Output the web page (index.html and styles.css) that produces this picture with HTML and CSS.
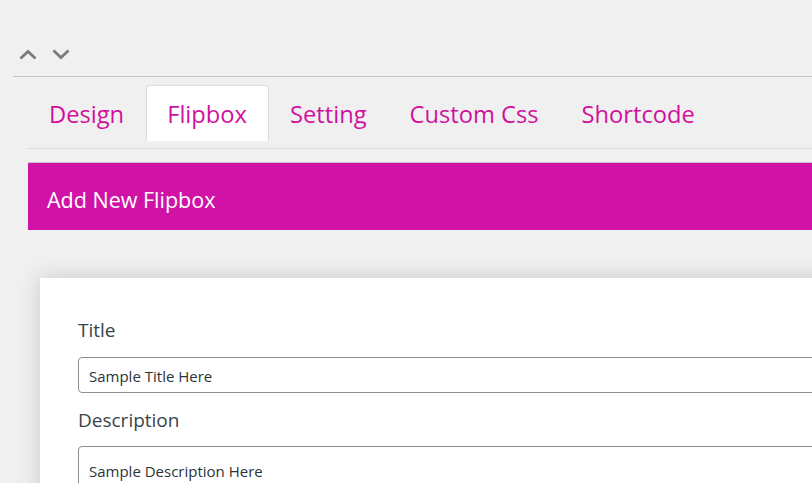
FILE: index.html
```html
<!DOCTYPE html>
<html>
<head>
<meta charset="utf-8">
<link rel="stylesheet" href="styles.css">
</head>
<body>
<div class="page">
  <div class="topbar">
    <svg class="chev" width="18" height="11" viewBox="0 0 18 11"><polyline points="1.5,9.5 9,2.5 16.5,9.5" fill="none" stroke="#787c82" stroke-width="2.8"/></svg>
    <svg class="chev" width="18" height="11" viewBox="0 0 18 11"><polyline points="1.5,1.5 9,8.5 16.5,1.5" fill="none" stroke="#787c82" stroke-width="2.8"/></svg>
  </div>
  <div class="rule"></div>
  <div class="wrap">
    <div class="tabs">
      <div class="tab">Design</div>
      <div class="tab active">Flipbox</div>
      <div class="tab">Setting</div>
      <div class="tab">Custom Css</div>
      <div class="tab">Shortcode</div>
    </div>
    <div class="banner">Add New Flipbox</div>
    <div class="card">
      <label class="label">Title</label>
      <div class="input">Sample Title Here</div>
      <label class="label">Description</label>
      <div class="textarea">Sample Description Here</div>
    </div>
  </div>
</div>
</body>
</html>
```
FILE: styles.css
```css
html, body {
  margin: 0;
  padding: 0;
  background: #f0f0f0;
  overflow: hidden;
  height: 483px;
}
.page {
  font-family: "Open Sans", "Noto Sans", sans-serif;
  width: 1000px;
}
.topbar {
  height: 76px;
  box-sizing: border-box;
  padding: 49px 0 0 19px;
  display: flex;
  gap: 15px;
  align-items: flex-start;
}
.chev { display: block; }
.rule {
  margin-left: 13px;
  border-top: 1px solid #c3c4c7;
}
.wrap {
  padding-left: 28px;
}
.tabs {
  display: flex;
  padding: 8px 0 7px 0;
  border-bottom: 1px solid #dcdcde;
}
.tab {
  height: 56px;
  box-sizing: border-box;
  padding: 0 21px 0 20px;
  font-size: 23.7px;
  line-height: 56px;
  color: #d0109f;
  border: 1px solid transparent;
  border-bottom: none;
  border-radius: 4px 4px 0 0;
}
.tab.active {
  background: #fff;
  border-color: #dcdcde;
}
.banner {
  margin-top: 13px;
  border-top: 1px solid #c8c8c8;
  height: 67px;
  background: #d012a7;
  color: #fff;
  font-size: 21.5px;
  line-height: 74px;
  padding-left: 19px;
  overflow: hidden;
}
.card {
  margin: 48px 0 0 12px;
  background: #fff;
  box-shadow: 0 0 22px rgba(0, 0, 0, 0.16);
  padding: 38px 0 0 38px;
  height: 300px;
}
.label {
  display: block;
  font-size: 19px;
  line-height: 28px;
  color: #3c434a;
}
.input, .textarea {
  width: 900px;
  box-sizing: border-box;
  border: 1px solid #8c8f94;
  border-radius: 4px;
  font-size: 15px;
  color: #2c3338;
  padding: 0 10px;
}
.input {
  margin-top: 13px;
  height: 36px;
  line-height: 37px;
  margin-bottom: 13px;
}
.textarea {
  margin-top: 12px;
  height: 80px;
  padding-top: 12px;
  line-height: 24px;
}
```
